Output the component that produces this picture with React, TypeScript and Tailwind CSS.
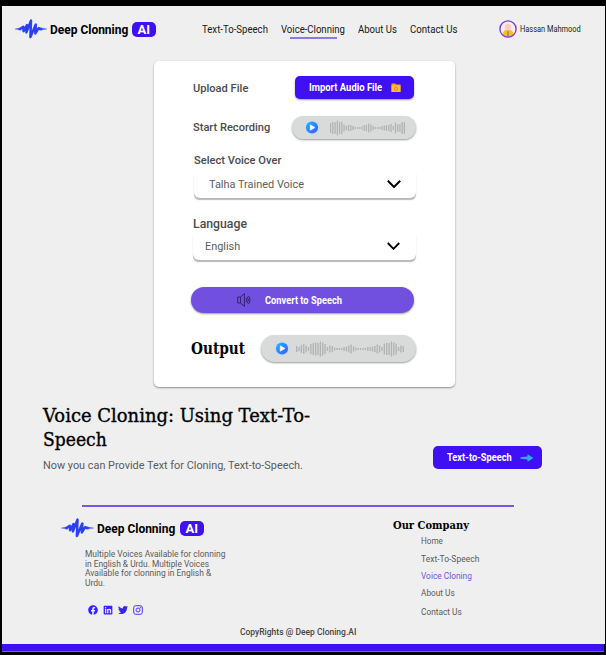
import { useLayoutEffect, useRef, type ReactNode } from "react";
import { FaFacebook, FaLinkedin, FaTwitter } from "react-icons/fa";

/** One line of text, scaled horizontally to fill the width of its box. */
function Line({ className, children }: { className: string; children: ReactNode }) {
  const box = useRef<HTMLDivElement>(null);
  const text = useRef<HTMLSpanElement>(null);
  useLayoutEffect(() => {
    if (!box.current || !text.current) return;
    const ratio = box.current.clientWidth / text.current.offsetWidth;
    text.current.style.transform = `scaleX(${ratio})`;
  }, []);
  return (
    <div ref={box} className={`shrink-0 whitespace-nowrap ${className}`}>
      <span ref={text} className="inline-block origin-left">
        {children}
      </span>
    </div>
  );
}

function LogoMark({ className }: { className: string }) {
  return (
    <svg viewBox="0 0 32 20" className={`shrink-0 ${className}`} fill="none" stroke="#2b3ff5" strokeLinejoin="round" strokeLinecap="round">
      <path d="M0 10 L5 9 L6 11Z M32 10 L26 9 L25 11Z" fill="#2b3ff5" strokeWidth=".3" />
      <path d="M5 10 L8.2 7.8 L8.6 12.2 L12 6 L11.4 13.4 L16 1.6 L15.4 18 L20.8 5.6 L20.4 14.4 L23.6 9.2 L26 10" strokeWidth="2.5" />
    </svg>
  );
}

function Badge() {
  return (
    <div className="flex h-[15px] w-6 shrink-0 items-center justify-center rounded-[5px] bg-[#4010f5]">
      <Line className="w-[13px] text-[13px] leading-[15px] font-bold text-white">AI</Line>
    </div>
  );
}

function Play() {
  return (
    <svg viewBox="0 0 16 16" className="size-4 shrink-0">
      <defs>
        <linearGradient id="play" x1="0" y1="0" x2="1" y2="1">
          <stop offset="0" stopColor="#18bafc" />
          <stop offset="1" stopColor="#4852fa" />
        </linearGradient>
      </defs>
      <circle cx="8" cy="7.5" r="7.3" fill="#c4dcf5" />
      <circle cx="8" cy="7.5" r="6.1" fill="url(#play)" />
      <path d="M6.2 4.7v5.6L11 7.5z" fill="#fff" stroke="#fff" strokeWidth=".5" strokeLinejoin="round" />
    </svg>
  );
}

const recordingBars = [10, 12, 12, 15, 12, 12, 7, 4, 6, 6, 4, 2, 2, 2, 3, 6, 6, 9, 7, 4, 2, 2, 2, 4, 5, 6, 6, 8, 4, 11, 7, 8, 12, 12];
const outputBars = [6, 4, 8, 10, 7, 4, 10, 12, 13, 12, 15, 13, 10, 4, 7, 6, 3, 2, 2, 2, 4, 5, 7, 9, 5, 3, 2, 2, 2, 2, 4, 4, 5, 6, 9, 7, 4, 11, 12, 12, 15, 13, 11, 4, 7, 6];

function Wave({ bars, className }: { bars: number[]; className: string }) {
  const step = 100 / bars.length;
  return (
    <svg viewBox="0 0 100 16" preserveAspectRatio="none" className={`h-4 shrink-0 ${className}`}>
      {bars.map((h, i) => (
        <rect key={i} x={i * step} y={8 - h / 2} width={step * 0.56} height={h} fill="#b0b3b2" />
      ))}
    </svg>
  );
}

function Chevron({ className }: { className: string }) {
  return (
    <svg viewBox="0 0 14 8" className={`shrink-0 ${className}`} fill="none" stroke="#000" strokeWidth="2">
      <path d="M.8 .8 7 7 13.2 .8" />
    </svg>
  );
}

function Folder() {
  return (
    <svg viewBox="0 0 10 10" className="size-[10px] shrink-0">
      <path d="M.5 .5h3.8l1 1H9.5v7.3h-9z" fill="#f5a300" />
      <path d="M.5 2.5h9v6.5h-9z" fill="#ffbd2e" />
      <circle cx="5" cy="5.8" r="1.6" fill="none" stroke="#f57a20" strokeWidth=".9" />
    </svg>
  );
}

function Speaker() {
  return (
    <svg viewBox="0 0 14 14" className="h-[14px] w-[14px] shrink-0" fill="none" stroke="#221658" strokeWidth=".8">
      <path d="M.7 4h2.8L7.4.7v12.6L3.5 10H.7zM3.5 4v6M9 5q1.5 2 0 4M10.3 3.8q2.2 3.2 0 6.4M11.4 2.8q3.2 4.2 0 8.4" />
    </svg>
  );
}

function Avatar() {
  return (
    <svg viewBox="0 0 18 18" className="size-[18px] shrink-0">
      <defs>
        <clipPath id="face"><circle cx="9" cy="9" r="8" /></clipPath>
      </defs>
      <circle cx="9" cy="9" r="8" fill="#f4efed" />
      <g clipPath="url(#face)">
        <path d="M4 18v-5q.5-3 3-3h4q2.5 0 3 3v5z" fill="#ffc107" />
        <path d="M7 10h4l-2 2z" fill="#ffb49c" />
        <circle cx="9" cy="7" r="3.1" fill="#ffccbc" />
        <path d="M8.5 11h1v6h-1z" fill="#4472ad" />
      </g>
      <circle cx="9" cy="9" r="8.1" fill="none" stroke="#7b3fd6" strokeWidth="1.4" />
    </svg>
  );
}

function Instagram() {
  return (
    <svg viewBox="0 0 10 10" className="ml-[5px] size-[10px]" fill="none" stroke="#3425ff" strokeWidth=".9">
      <rect x=".7" y=".7" width="8.6" height="8.6" rx="2" />
      <circle cx="5" cy="5" r="2" />
      <circle cx="7.5" cy="2.5" r=".3" />
    </svg>
  );
}

export default function App() {
  return (
    <div className="flex h-[655px] w-[606px] flex-col overflow-hidden bg-black pt-[6px] pr-[1px] pb-[3px] pl-[2px] font-['Roboto',sans-serif]">
      <div className="flex h-[638px] shrink-0 flex-col bg-[#efefef]">
        <header className="flex h-[46px] shrink-0 items-center pl-[13px]">
          <LogoMark className="h-5 w-8" />
          <Line className="ml-[3px] w-[78px] text-[13.5px] leading-5 font-bold">Deep Clonning</Line>
          <div className="ml-1"><Badge /></div>
          <nav className="ml-[46px] flex text-[11.5px] leading-5 text-[#171717]">
            <Line className="w-[66px]">Text-To-Speech</Line>
            <div className="ml-[13px] h-5 w-16">
              <Line className="w-16">Voice-Clonning</Line>
              <div className="mt-[-2px] ml-[9px] h-[2px] w-[47px] bg-[#9275ed]" />
            </div>
            <Line className="ml-[13px] w-[39px]">About Us</Line>
            <Line className="ml-[13px] w-[47px]">Contact Us</Line>
          </nav>
          <div className="ml-[42px] flex items-center">
            <Avatar />
            <Line className="ml-[3px] w-[61px] text-[9px] leading-4 text-[#202020]">Hassan Mahmood</Line>
          </div>
        </header>

        <main className="mt-[9px] ml-[152px] h-[326px] w-[301px] shrink-0 rounded-[5px] bg-white pt-[15px] pl-[37px] text-[#4b4b4b] shadow-[0_1px_2px_rgba(0,0,0,0.4)]">
          <div className="flex h-[23px] items-center pl-[2px]">
            <Line className="w-[55px] text-[11.5px] leading-5 font-medium">Upload File</Line>
            <button className="ml-[47px] flex h-[23px] w-[119px] items-center rounded-[5px] bg-[#4010f5] pl-[14px] text-white shadow-[0_1px_2px_rgba(0,0,0,0.4)]">
              <Line className="w-[73px] text-left text-[11px] leading-5 font-bold">Import Audio File</Line>
              <div className="ml-[9px]"><Folder /></div>
            </button>
          </div>
          <div className="mt-[17px] flex h-[23px] items-center pl-[2px]">
            <Line className="w-[77px] pb-[2px] text-[11.5px] leading-5 font-medium">Start Recording</Line>
            <div className="ml-[22px] flex h-[23px] w-[124px] items-center rounded-full bg-[#d9dbda] pl-3 shadow-[0_1px_2px_rgba(0,0,0,0.4)]">
              <Play />
              <Wave bars={recordingBars} className="ml-[10px] w-[76px]" />
            </div>
          </div>
          <Line className="mt-[11px] ml-[3px] w-[87px] text-[11.5px] leading-5 font-medium">Select Voice Over</Line>
          <div className="mt-[2px] ml-[3px] flex h-[26px] w-[222px] items-center rounded-b-[6px] bg-white pb-[2px] pl-[15px] shadow-[0_2px_1px_-0.5px_rgba(0,0,0,0.28)]">
            <Line className="w-[95px] text-[11.5px] leading-5 text-[#5d5d5d]">Talha Trained Voice</Line>
            <Chevron className="ml-[83px] h-2 w-[14px]" />
          </div>
          <Line className="mt-[16px] ml-[2px] w-[54px] text-[12.5px] leading-5 font-medium">Language</Line>
          <div className="ml-[2px] flex h-[26px] w-[223px] items-center rounded-b-[6px] bg-white pb-[2px] pl-3 shadow-[0_2px_1px_-0.5px_rgba(0,0,0,0.28)]">
            <Line className="w-[35px] text-[11.5px] leading-5 text-[#5d5d5d]">English</Line>
            <Chevron className="ml-[147px] h-2 w-[13px]" />
          </div>
          <button className="mt-[27px] flex h-[26px] w-[223px] items-center rounded-full bg-[#7150df] pl-[46px] text-white shadow-[0_1px_2px_rgba(0,0,0,0.4)]">
            <Speaker />
            <Line className="ml-[14px] w-[77px] pt-[1px] text-left text-[11px] leading-5 font-bold">Convert to Speech</Line>
          </button>
          <div className="mt-[22px] flex h-[27px] items-center">
            <Line className="w-[54px] font-['DejaVu_Serif',serif] text-[16px] leading-6 font-bold text-black">Output</Line>
            <div className="ml-[16px] flex h-[27px] w-[155px] items-center rounded-full bg-[#d9dbda] pl-[13px] shadow-[0_1px_2px_rgba(0,0,0,0.4)]">
              <Play />
              <Wave bars={outputBars} className="ml-[6px] w-[109px]" />
            </div>
          </div>
        </main>

        <section className="flex h-[118px] shrink-0 pt-[17px] pl-[41px]">
          <div className="w-[390px]">
            <h1 className="font-['DejaVu_Serif',serif] text-[18.5px] leading-6 text-black [-webkit-text-stroke:0.35px_black]">
              <Line className="w-[267px]">Voice Cloning: Using Text-To-</Line>
              <Line className="w-[64px]">Speech</Line>
            </h1>
            <Line className="mt-[3px] w-[260px] text-[11.5px] leading-5 text-[#5b5b5b]">Now you can Provide Text for Cloning, Text-to-Speech.</Line>
          </div>
          <button className="mt-[42px] flex h-[23px] w-[109px] items-center rounded-[5px] bg-[#4010f5] pl-[14px] text-white">
            <Line className="w-[65px] text-left text-[11px] leading-5 font-bold">Text-to-Speech</Line>
            <svg viewBox="0 0 14 8" className="ml-2 h-2 w-[14px]">
              <path d="M.5 3.3 7.5 2.6V.3L13.5 4l-6 3.700V5.400L.5 4.700z" fill="#35a7ec" />
            </svg>
          </button>
        </section>

        <footer className="flex h-[139px] shrink-0 flex-col">
          <div className="ml-[80px] h-[2px] w-[432px] shrink-0 bg-[#7955e3]" />
          <div className="flex h-[115px] pl-[59px]">
            <div className="w-[332px]">
              <div className="flex h-[42px] items-center">
                <LogoMark className="h-5 w-[33px]" />
                <Line className="ml-[3px] w-[78px] text-[13.5px] leading-5 font-bold">Deep Clonning</Line>
                <div className="ml-[5px]"><Badge /></div>
              </div>
              <div className="mt-[1px] ml-6 text-[8.5px] leading-[9.7px] text-[#5b5b5b]">
                <Line className="w-[140px]">Multiple Voices Available for clonning</Line>
                <Line className="w-[124px]">in English &amp; Urdu. Multiple Voices</Line>
                <Line className="w-[126px]">Available for clonning in English &amp;</Line>
                <Line className="w-[20px]">Urdu.</Line>
              </div>
              <div className="mt-[16px] ml-[27px] flex items-center text-[#3425ff]">
                <FaFacebook className="size-[10px]" />
                <FaLinkedin className="ml-[5px] size-[10px]" />
                <FaTwitter className="ml-[5px] size-[10px]" />
                <Instagram />
              </div>
            </div>
            <div className="pt-[9px] text-[8.5px] leading-[14px] text-[#5b5b5b]">
              <Line className="w-[76px] font-['DejaVu_Serif',serif] text-[11.5px] leading-[18px] font-bold text-black">Our Company</Line>
              <div className="ml-7">
                <Line className="w-[22px]">Home</Line>
                <Line className="mt-[4px] w-[58px]">Text-To-Speech</Line>
                <Line className="mt-[3px] w-[51px] text-[#7354e3]">Voice Cloning</Line>
                <Line className="mt-[3px] w-[34px]">About Us</Line>
                <Line className="mt-[5px] w-[41px]">Contact Us</Line>
              </div>
            </div>
          </div>
          <Line className="mt-[2px] ml-[238px] w-[116px] text-[8.5px] leading-4 font-medium text-[#454545]">CopyRights @ Deep Cloning.AI</Line>
        </footer>
      </div>
      <div className="mr-[1px] h-[8px] shrink-0 border-b border-[#7659ed] bg-[#4010f5]" />
    </div>
  );
}
